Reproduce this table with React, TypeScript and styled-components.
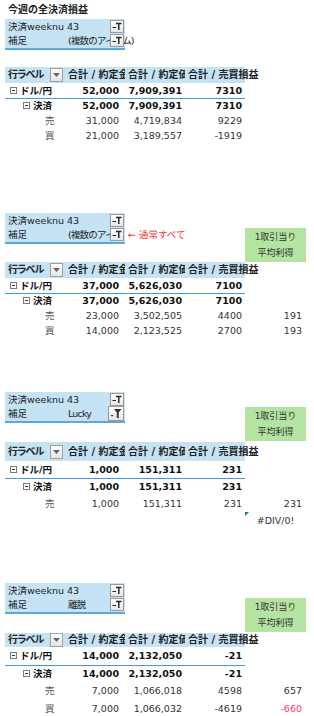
import React from "react";
import styled, { createGlobalStyle } from "styled-components";

const GlobalStyle = createGlobalStyle`
  body {
    margin: 0;
    background: #ffffff;
    font-family: "DejaVu Sans", "Noto Sans CJK JP", sans-serif;
    font-size: 9.5px;
    color: #222;
  }
`;

type Row = {
  label: string;
  level: 0 | 1 | 2;
  bold?: boolean;
  b: string;
  c: string;
  d: string;
  e?: string;
  eRed?: boolean;
};

type Block = {
  week: string;
  sub: string;
  note?: string;
  green?: boolean;
  funnel?: boolean;
  gap: number;
  topH: number;
  headH: number;
  rowH: number;
  rows: Row[];
  divError?: boolean;
};

const blocks: Block[] = [
  {
    week: "決済weeknu 43",
    sub: "(複数のアイテム)",
    gap: 4,
    topH: 48,
    headH: 16,
    rowH: 15,
    rows: [
      { label: "ドル/円", level: 0, bold: true, b: "52,000", c: "7,909,391", d: "7310" },
      { label: "決済", level: 1, bold: true, b: "52,000", c: "7,909,391", d: "7310" },
      { label: "売", level: 2, b: "31,000", c: "4,719,834", d: "9229" },
      { label: "買", level: 2, b: "21,000", c: "3,189,557", d: "-1919" },
    ],
  },
  {
    week: "決済weeknu 43",
    sub: "(複数のアイテム)",
    note: "← 通常すべて",
    green: true,
    gap: 70,
    topH: 49,
    headH: 16,
    rowH: 15,
    rows: [
      { label: "ドル/円", level: 0, bold: true, b: "37,000", c: "5,626,030", d: "7100" },
      { label: "決済", level: 1, bold: true, b: "37,000", c: "5,626,030", d: "7100" },
      { label: "売", level: 2, b: "23,000", c: "3,502,505", d: "4400", e: "191" },
      { label: "買", level: 2, b: "14,000", c: "2,123,525", d: "2700", e: "193" },
    ],
  },
  {
    week: "決済weeknu 43",
    sub: "Lucky",
    green: true,
    funnel: true,
    gap: 54,
    topH: 50,
    headH: 19,
    rowH: 17,
    divError: true,
    rows: [
      { label: "ドル/円", level: 0, bold: true, b: "1,000", c: "151,311", d: "231" },
      { label: "決済", level: 1, bold: true, b: "1,000", c: "151,311", d: "231" },
      { label: "売", level: 2, b: "1,000", c: "151,311", d: "231", e: "231" },
    ],
  },
  {
    week: "決済weeknu 43",
    sub: "離脱",
    green: true,
    gap: 54,
    topH: 50,
    headH: 14,
    rowH: 17.5,
    rows: [
      { label: "ドル/円", level: 0, bold: true, b: "14,000", c: "2,132,050", d: "-21" },
      { label: "決済", level: 1, bold: true, b: "14,000", c: "2,132,050", d: "-21" },
      { label: "売", level: 2, b: "7,000", c: "1,066,018", d: "4598", e: "657" },
      { label: "買", level: 2, b: "7,000", c: "1,066,032", d: "-4619", e: "-660", eRed: true },
    ],
  },
];

const Page = styled.div`
  width: 314px;
  padding: 4px 0 0 5px;
  box-sizing: border-box;
`;

const Title = styled.div`
  height: 11px;
  line-height: 11px;
  padding-left: 3px;
  font-weight: bold;
  font-size: 10px;
`;

const Section = styled.section<{ $gap: number }>`
  margin-top: ${(p) => p.$gap}px;
`;

const TopBlock = styled.div<{ $h: number }>`
  display: flex;
  align-items: flex-start;
  height: ${(p) => p.$h}px;
  width: 301px;
`;

const FilterBox = styled.div`
  width: 120px;
  height: 28px;
  padding-top: 1px;
  background: #c5e3f4;
  border-bottom: 2px solid #5ba9dc;
  flex-shrink: 0;
`;

const FilterRow = styled.div`
  position: relative;
  display: flex;
  height: 14px;
  line-height: 14px;
  white-space: nowrap;
`;

const FilterLabel = styled.span<{ $w?: number }>`
  padding-left: 3px;
  width: ${(p) => (p.$w ? `${p.$w}px` : "auto")};
  flex-shrink: 0;
`;

const FilterValue = styled.span<{ $clip?: boolean }>`
  letter-spacing: -0.8px;
  overflow: ${(p) => (p.$clip ? "hidden" : "visible")};
  max-width: ${(p) => (p.$clip ? "52px" : "none")};
`;

const FilterBtn = styled.span<{ $big?: boolean }>`
  position: absolute;
  right: 1px;
  top: ${(p) => (p.$big ? "-1px" : "0")};
  width: ${(p) => (p.$big ? 16 : 14)}px;
  height: ${(p) => (p.$big ? 15 : 13)}px;
  box-sizing: border-box;
  border: 1px solid #9a9a9a;
  background: linear-gradient(#ffffff, #e6e6e6);
  display: flex;
  align-items: center;
  justify-content: center;
`;

const Note = styled.span`
  margin: 15px 0 0 3px;
  color: #f23c3c;
  line-height: 14px;
  white-space: nowrap;
`;

const GreenBox = styled.div`
  margin: 15px 0 0 auto;
  width: 61px;
  height: 34px;
  background: #b5e3a1;
  display: flex;
  flex-direction: column;
  align-items: center;
  justify-content: center;
  line-height: 16px;
  color: #333;
  font-size: 9px;
`;

const PivotRow = styled.div<{ $h: number }>`
  display: grid;
  grid-template-columns: 60px 60px 60px 60px 61px;
  height: ${(p) => p.$h}px;
  line-height: ${(p) => p.$h}px;
`;

const HeadCell = styled.div<{ $clip?: boolean; $narrow?: boolean }>`
  background: #c5e3f4;
  font-weight: bold;
  font-size: 10px;
  letter-spacing: ${(p) => (p.$narrow ? "-1.2px" : "0")};
  padding-left: 3px;
  white-space: nowrap;
  overflow: ${(p) => (p.$clip ? "hidden" : "visible")};
  position: relative;
  display: flex;
  align-items: center;
`;

const Dropdown = styled.span`
  position: absolute;
  right: 2px;
  top: 50%;
  margin-top: -7px;
  width: 13px;
  height: 14px;
  box-sizing: border-box;
  border: 1px solid #a0a0a0;
  background: linear-gradient(#ffffff, #e4e4e4);
  display: flex;
  align-items: center;
  justify-content: center;
`;

const LabelCell = styled.div<{ $level: number; $bold?: boolean; $line?: boolean }>`
  display: flex;
  align-items: center;
  gap: 3px;
  padding-left: ${(p) => [5, 18, 40][p.$level]}px;
  font-weight: ${(p) => (p.$bold ? "bold" : "normal")};
  color: ${(p) => (p.$level === 2 ? "#555" : "#111")};
  white-space: nowrap;
  border-bottom: ${(p) => (p.$line ? "1px solid #3f9ddb" : "none")};
`;

const ValueCell = styled.div<{ $bold?: boolean; $line?: boolean; $pad?: number; $red?: boolean }>`
  text-align: right;
  padding-right: ${(p) => p.$pad ?? 3}px;
  font-weight: ${(p) => (p.$bold ? "bold" : "normal")};
  color: ${(p) => (p.$red ? "#ff3b6b" : p.$bold ? "#111" : "#333")};
  white-space: nowrap;
  border-bottom: ${(p) => (p.$line ? "1px solid #3f9ddb" : "none")};
`;

const ErrorCell = styled.div`
  position: relative;
  text-align: center;
  color: #333;
`;

const ErrorMark = styled.span`
  position: absolute;
  left: 0;
  top: 0;
  width: 0;
  height: 0;
  border-top: 4px solid #1e8a2e;
  border-right: 4px solid transparent;
`;

const MinusBox = styled.span`
  width: 7px;
  height: 7px;
  box-sizing: border-box;
  border: 1px solid #7a7a7a;
  background: #fff;
  position: relative;
  flex-shrink: 0;
  &::after {
    content: "";
    position: absolute;
    left: 1px;
    right: 1px;
    top: 2px;
    height: 1px;
    background: #333;
  }
`;

const FilterIcon = () => (
  <svg width="10" height="9" viewBox="0 0 10 9">
    <path d="M0.5 5.5h3.5" stroke="#222" strokeWidth="1" />
    <path d="M4 1.5h5.5M6.8 1.5v6.5" stroke="#222" strokeWidth="1.4" />
  </svg>
);

const FunnelIcon = () => (
  <svg width="12" height="11" viewBox="0 0 12 11">
    <path d="M4 1h7.5L8.7 4.6V10H6.8V4.6z" fill="#333" />
    <path d="M0.5 7h3L2 8.7z" fill="#333" />
  </svg>
);

const DownIcon = () => (
  <svg width="7" height="4" viewBox="0 0 7 4">
    <path d="M0 0h7L3.5 4z" fill="#666" />
  </svg>
);

const PivotSection = ({ block }: { block: Block }) => (
  <Section $gap={block.gap}>
    <TopBlock $h={block.topH}>
      <FilterBox>
        <FilterRow>
          <FilterLabel>{block.week}</FilterLabel>
          <FilterBtn>
            <FilterIcon />
          </FilterBtn>
        </FilterRow>
        <FilterRow>
          <FilterLabel $w={60}>補足</FilterLabel>
          <FilterValue $clip={!!block.note}>{block.sub}</FilterValue>
          <FilterBtn $big={block.funnel}>{block.funnel ? <FunnelIcon /> : <FilterIcon />}</FilterBtn>
        </FilterRow>
      </FilterBox>
      {block.note && <Note>{block.note}</Note>}
      {block.green && (
        <GreenBox>
          <span>1取引当り</span>
          <span>平均利得</span>
        </GreenBox>
      )}
    </TopBlock>
    <PivotRow $h={block.headH}>
      <HeadCell $narrow>
        行ラベル
        <Dropdown>
          <DownIcon />
        </Dropdown>
      </HeadCell>
      <HeadCell $clip>合計 / 約定金額</HeadCell>
      <HeadCell $clip>合計 / 約定価格</HeadCell>
      <HeadCell>合計 / 売買損益</HeadCell>
      <div />
    </PivotRow>
    {block.rows.map((r, i) => (
      <PivotRow key={i} $h={block.rowH}>
        <LabelCell $level={r.level} $bold={r.bold} $line={i === 0}>
          {r.level < 2 && <MinusBox />}
          {r.label}
        </LabelCell>
        <ValueCell $bold={r.bold} $line={i === 0} $pad={6}>
          {r.b}
        </ValueCell>
        <ValueCell $bold={r.bold} $line={i === 0}>
          {r.c}
        </ValueCell>
        <ValueCell $bold={r.bold} $line={i === 0}>
          {r.d}
        </ValueCell>
        <ValueCell $pad={4} $red={r.eRed}>
          {r.e}
        </ValueCell>
      </PivotRow>
    ))}
    {block.divError && (
      <PivotRow $h={block.rowH}>
        <div />
        <div />
        <div />
        <div />
        <ErrorCell>
          <ErrorMark />
          #DIV/0!
        </ErrorCell>
      </PivotRow>
    )}
  </Section>
);

export default function App() {
  return (
    <>
      <GlobalStyle />
      <Page>
        <Title>今週の全決済損益</Title>
        {blocks.map((b, i) => (
          <PivotSection key={i} block={b} />
        ))}
      </Page>
    </>
  );
}
